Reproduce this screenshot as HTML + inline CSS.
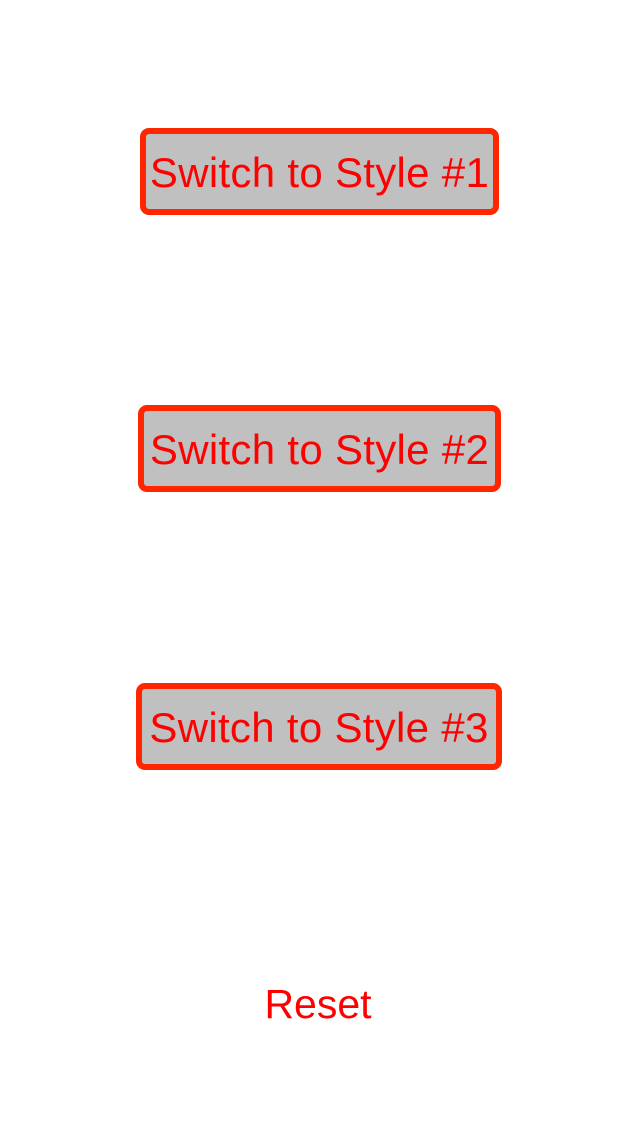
<!DOCTYPE html>
<html><head><style>
body{margin:0;width:640px;height:1136px;background:#fff;position:relative;font-family:"Liberation Sans",sans-serif;overflow:hidden}
.b{position:absolute;box-sizing:border-box;border:6px solid #ff2600;border-radius:9px;background:#c0c0c0;color:#ff0000;font-size:42px;display:flex;align-items:center;justify-content:center;white-space:nowrap;letter-spacing:0.3px;padding-top:3px}
.r{position:absolute;left:-2px;width:640px;text-align:center;color:#ff0000;font-size:41px;top:981px}
</style></head><body>
<div class="b" style="left:140px;top:128px;width:359px;height:87px">Switch to Style #1</div>
<div class="b" style="left:138px;top:405px;width:363px;height:87px">Switch to Style #2</div>
<div class="b" style="left:136px;top:683px;width:366px;height:87px">Switch to Style #3</div>
<div class="r">Reset</div>
</body></html>
